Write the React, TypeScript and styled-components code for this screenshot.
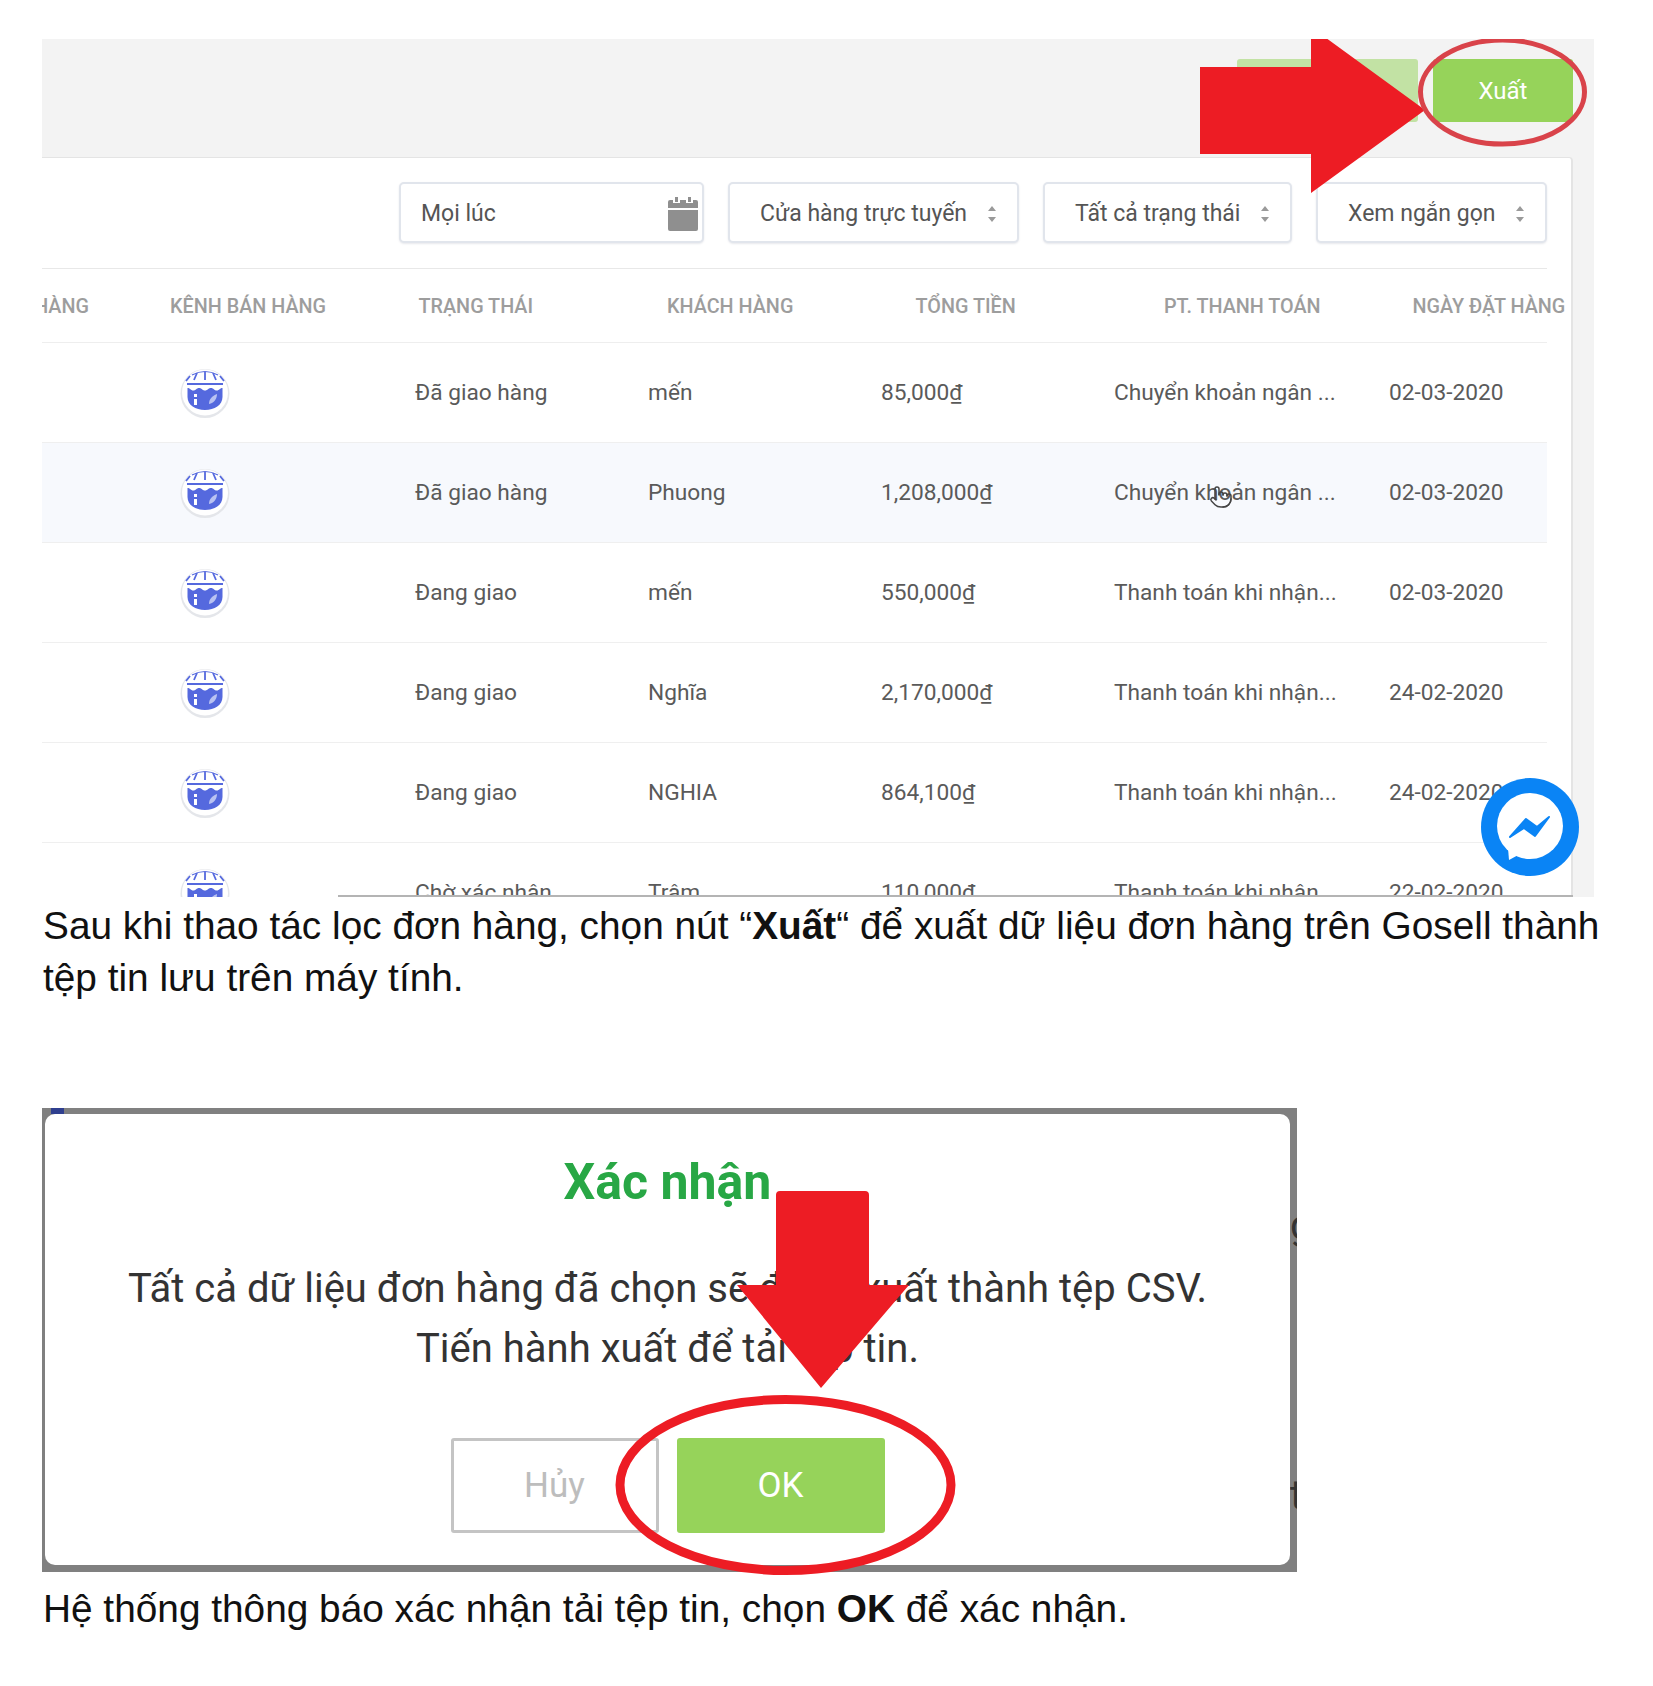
import styled, { createGlobalStyle } from 'styled-components'
import { Pointer } from 'lucide-react'

const GlobalStyle = createGlobalStyle`
  html, body {
    margin: 0;
    background: #fff;
  }
`

const Page = styled.div`
  width: 1653px;
  height: 1686px;
  padding: 39px 0 0 42px;
  box-sizing: border-box;
  overflow: hidden;
  font-family: 'Liberation Sans', Arial, sans-serif;
`

const OrdersShot = styled.section`
  position: relative;
  width: 1552px;
  height: 858px;
  background: #f3f3f3;
  overflow: hidden;
  font-family: Roboto, 'Noto Sans', sans-serif;
`

const TopBar = styled.div`
  display: flex;
  justify-content: flex-end;
  gap: 15px;
  height: 118px;
  padding: 20px 21px 0 0;
  box-sizing: border-box;
`

const ExportButton = styled.div<{ $faded?: boolean }>`
  width: ${(p) => (p.$faded ? '181px' : '140px')};
  height: 63px;
  display: flex;
  align-items: center;
  justify-content: center;
  border-radius: 3px;
  background: ${(p) => (p.$faded ? '#c2e2a4' : '#96d35a')};
  color: #fff;
  font-size: 24px;
`

const Panel = styled.div`
  margin-right: 21px;
  height: 740px;
  background: #fff;
  border-top: 1px solid #e4e4e4;
  border-right: 2px solid #e4e4e4;
  border-top-right-radius: 4px;
  box-sizing: border-box;
`

const Filters = styled.div`
  display: flex;
  justify-content: flex-end;
  gap: 24px;
  margin-right: 24px;
  padding: 24px 0 25px;
  border-bottom: 1px solid #e8e8e8;
`

const Filter = styled.div<{ $width: number }>`
  width: ${(p) => p.$width}px;
  height: 61px;
  display: flex;
  align-items: center;
  justify-content: space-between;
  padding: 2px 19px 0 30px;
  box-sizing: border-box;
  background: #fff;
  border: 2px solid #e1e5ec;
  border-radius: 5px;
  box-shadow: 0 1px 2px rgba(120, 130, 150, 0.18);
  color: #555;
  font-size: 23px;
  white-space: nowrap;
`

const DateFilter = styled(Filter)`
  padding: 2px 4px 0 20px;
`

const HeaderRow = styled.div`
  display: grid;
  grid-template-columns: 128px repeat(5, 248.500px) 260px;
  align-items: center;
  height: 74px;
  padding-top: 2px;
  box-sizing: border-box;
  margin-right: 24px;
  border-bottom: 1px solid #eee;
  color: #9d9d9d;
  font-size: 19.800px;
  font-weight: 500;
  white-space: nowrap;
`

const ClippedHead = styled.div`
  text-align: right;
  padding-right: 81px;
  overflow: hidden;
  direction: rtl;
`

const Row = styled.div<{ $hover?: boolean }>`
  display: grid;
  grid-template-columns: 373px 233px 233px 233px 275px 1fr;
  align-items: center;
  height: 100px;
  margin-right: 24px;
  border-bottom: 1px solid #efefef;
  box-sizing: border-box;
  background: ${(p) => (p.$hover ? '#f7f9fd' : '#fff')};
  color: #5a5a5a;
  font-size: 22.700px;
  white-space: nowrap;
`

const ChannelCell = styled.div`
  padding: 1px 0 0 138px;
  display: flex;
`

const TextEdge = styled.div`
  position: absolute;
  left: 296px;
  right: 21px;
  bottom: 0;
  height: 2px;
  background: #b4b4b4;
`

const Overlay = styled.svg<{ $left: number; $top: number }>`
  position: absolute;
  left: ${(p) => p.$left}px;
  top: ${(p) => p.$top}px;
  overflow: visible;
`

const HandCursor = styled(Pointer)`
  position: absolute;
  left: 1167px;
  top: 446px;
  color: #444;
`

const Note = styled.p`
  margin: 0;
  padding-left: 1px;
  width: 1590px;
  color: #111;
  font-size: 38.800px;
  line-height: 52px;
`

const FirstNote = styled(Note)`
  padding-top: 3px;
`

const LastNote = styled(Note)`
  margin-top: 11px;
`

const DialogShot = styled.section`
  position: relative;
  display: flex;
  width: 1255px;
  height: 464px;
  margin-top: 104px;
  padding: 6px 0 7px 3px;
  box-sizing: border-box;
  background: #808080;
  font-family: Roboto, 'Noto Sans', sans-serif;
`

const CornerMark = styled.div`
  position: absolute;
  left: 9px;
  top: 0;
  width: 13px;
  height: 6px;
  background: #2f3f8f;
`

const Dialog = styled.div`
  width: 1245px;
  display: flex;
  flex-direction: column;
  align-items: center;
  background: #fff;
  border-radius: 10px;
  box-sizing: border-box;
  padding-top: 36px;
`

const DialogTitle = styled.h2`
  margin: 0;
  color: #28a745;
  font-size: 50px;
  line-height: 64px;
  font-weight: 700;
`

const DialogText = styled.p`
  margin: 45px 0 0;
  color: #333;
  font-size: 40px;
  line-height: 60px;
  text-align: center;
  white-space: nowrap;
`

const DialogActions = styled.div`
  display: flex;
  gap: 18px;
  margin-top: 59px;
`

const DialogButton = styled.div<{ $primary?: boolean }>`
  width: 208px;
  height: 95px;
  display: flex;
  align-items: center;
  justify-content: center;
  box-sizing: border-box;
  border-radius: 3px;
  font-size: 35px;
  background: ${(p) => (p.$primary ? '#96d35a' : '#fff')};
  color: ${(p) => (p.$primary ? '#fff' : '#bdbdbd')};
  border: ${(p) => (p.$primary ? 'none' : '3px solid #c4c4c4')};
`

const EdgeStrip = styled.div`
  position: relative;
  flex: 1;
  overflow: hidden;
`

const EdgeLetter = styled.span<{ $top: number }>`
  position: absolute;
  left: 0;
  top: ${(p) => p.$top}px;
  color: #333;
  font-size: 40px;
  line-height: 40px;
`

function SortIcon() {
  return (
    <svg width="12" height="18" viewBox="0 0 12 18">
      <path d="M6 1l4 5H2zM6 17l-4-5h8z" fill="#9a9a9a" />
    </svg>
  )
}

function CalendarIcon() {
  return (
    <svg width="30" height="34" viewBox="0 0 30 34">
      <path d="M7 0h3v5H7zM20 0h3v5h-3z" fill="#8f8f8f" />
      <path d="M2 3h3v3h7V3h6v3h7V3h3a2 2 0 0 1 2 2v6H0V5a2 2 0 0 1 2-2z" fill="#8f8f8f" />
      <path d="M0 13h30v19a2 2 0 0 1-2 2H2a2 2 0 0 1-2-2z" fill="#8f8f8f" />
    </svg>
  )
}

function StoreIcon() {
  return (
    <svg width="50" height="50" viewBox="0 0 50 50">
      <circle cx="25" cy="25.500" r="24.500" fill="#e4e6ea" />
      <circle cx="25" cy="24.500" r="23" fill="#fff" />
      <g stroke="#5569de" strokeWidth="1.800" fill="none">
        <path d="M7 16h36" />
        <path d="M12 7Q25 0 38 7" strokeWidth="1.200" />
        <path d="M25 4v8M17 5l-3 7M33 5l3 7M10 8l-4 5M40 8l4 5" />
      </g>
      <path
        d="M7.500 20c3 0 3 2.500 5.800 2.500s3-2.500 5.800-2.500 3 2.500 5.900 2.500 3-2.500 5.900-2.500 3 2.500 5.800 2.500 3-2.500 5.800-2.500v9c0 8-8 13-17.500 13S7.500 37 7.500 29z"
        fill="#5569de"
      />
      <path d="M14 26h3v3h-3zM14 31h3v6h-3z" fill="#fff" />
      <path d="M29 36c0-5 3-8 8-10 0 5-3 9-8 10z" fill="#b9c2f2" />
    </svg>
  )
}

function MessengerButton() {
  return (
    <Overlay $left={1439} $top={739} width="98" height="98" viewBox="0 0 98 98">
      <circle cx="49" cy="49" r="49" fill="#0a84f5" />
      <circle cx="49" cy="48" r="33" fill="#fff" />
      <path d="M27 70l1 12 13-7z" fill="#fff" />
      <path
        d="M29 59l16-18 11 8 12-10-14 19-11-8z"
        fill="#0a84f5"
        stroke="#0a84f5"
        strokeWidth="2"
        strokeLinejoin="round"
      />
    </Overlay>
  )
}

const orders = [
  { status: 'Đã giao hàng', customer: 'mến', total: '85,000₫', payment: 'Chuyển khoản ngân ...', date: '02-03-2020' },
  { status: 'Đã giao hàng', customer: 'Phuong', total: '1,208,000₫', payment: 'Chuyển khoản ngân ...', date: '02-03-2020', hover: true },
  { status: 'Đang giao', customer: 'mến', total: '550,000₫', payment: 'Thanh toán khi nhận...', date: '02-03-2020' },
  { status: 'Đang giao', customer: 'Nghĩa', total: '2,170,000₫', payment: 'Thanh toán khi nhận...', date: '24-02-2020' },
  { status: 'Đang giao', customer: 'NGHIA', total: '864,100₫', payment: 'Thanh toán khi nhận...', date: '24-02-2020' },
  { status: 'Chờ xác nhận', customer: 'Trâm', total: '110,000₫', payment: 'Thanh toán khi nhận...', date: '22-02-2020' },
]

const filters = [
  { label: 'Cửa hàng trực tuyến', width: 291 },
  { label: 'Tất cả trạng thái', width: 249 },
  { label: 'Xem ngắn gọn', width: 231 },
]

export default function App() {
  return (
    <Page>
      <GlobalStyle />
      <OrdersShot>
        <TopBar>
          <ExportButton $faded />
          <ExportButton>Xuất</ExportButton>
        </TopBar>
        <Panel>
          <Filters>
            <DateFilter $width={305}>
              Mọi lúc
              <CalendarIcon />
            </DateFilter>
            {filters.map((f) => (
              <Filter key={f.label} $width={f.width}>
                {f.label}
                <SortIcon />
              </Filter>
            ))}
          </Filters>
          <HeaderRow>
            <ClippedHead>HÀNG</ClippedHead>
            <div>KÊNH BÁN HÀNG</div>
            <div>TRẠNG THÁI</div>
            <div>KHÁCH HÀNG</div>
            <div>TỔNG TIỀN</div>
            <div>PT. THANH TOÁN</div>
            <div>NGÀY ĐẶT HÀNG</div>
          </HeaderRow>
          {orders.map((o, i) => (
            <Row key={i} $hover={o.hover}>
              <ChannelCell>
                <StoreIcon />
              </ChannelCell>
              <div>{o.status}</div>
              <div>{o.customer}</div>
              <div>{o.total}</div>
              <div>{o.payment}</div>
              <div>{o.date}</div>
            </Row>
          ))}
        </Panel>
        <TextEdge />
        <HandCursor size={24} strokeWidth={1.5} />
        <Overlay $left={1158} $top={-12} width="225" height="166" viewBox="0 0 225 166">
          <path d="M0 40h111V0l114 83-114 83v-39H0z" fill="#ed1c24" />
        </Overlay>
        <Overlay $left={1376} $top={-1} width="169" height="108" viewBox="0 0 169 108">
          <ellipse cx="84.500" cy="54" rx="82" ry="52" fill="none" stroke="#d9434a" strokeWidth="5" />
        </Overlay>
        <MessengerButton />
      </OrdersShot>
      <FirstNote>
        Sau khi thao tác lọc đơn hàng, chọn nút “<b>Xuất</b>“ để xuất dữ liệu đơn hàng trên Gosell thành tệp tin lưu trên máy tính.
      </FirstNote>
      <DialogShot>
        <CornerMark />
        <Dialog>
          <DialogTitle>Xác nhận</DialogTitle>
          <DialogText>
            Tất cả dữ liệu đơn hàng đã chọn sẽ được xuất thành tệp CSV.
            <br />
            Tiến hành xuất để tải tệp tin.
          </DialogText>
          <DialogActions>
            <DialogButton>Hủy</DialogButton>
            <DialogButton $primary>OK</DialogButton>
          </DialogActions>
        </Dialog>
        <EdgeStrip>
          <EdgeLetter $top={92}>g</EdgeLetter>
          <EdgeLetter $top={362}>t</EdgeLetter>
        </EdgeStrip>
        <Overlay $left={695} $top={83} width="172" height="197" viewBox="0 0 172 197">
          <path d="M39 4a4 4 0 0 1 4-4h85a4 4 0 0 1 4 4v90h40L84 197 0 94h39z" fill="#ed1c24" />
        </Overlay>
        <Overlay $left={574} $top={287} width="339" height="180" viewBox="0 0 339 180">
          <ellipse cx="169.500" cy="90" rx="165.500" ry="85.500" fill="none" stroke="#ed1c24" strokeWidth="9" />
        </Overlay>
      </DialogShot>
      <LastNote>
        Hệ thống thông báo xác nhận tải tệp tin, chọn <b>OK</b> để xác nhận.
      </LastNote>
    </Page>
  )
}
